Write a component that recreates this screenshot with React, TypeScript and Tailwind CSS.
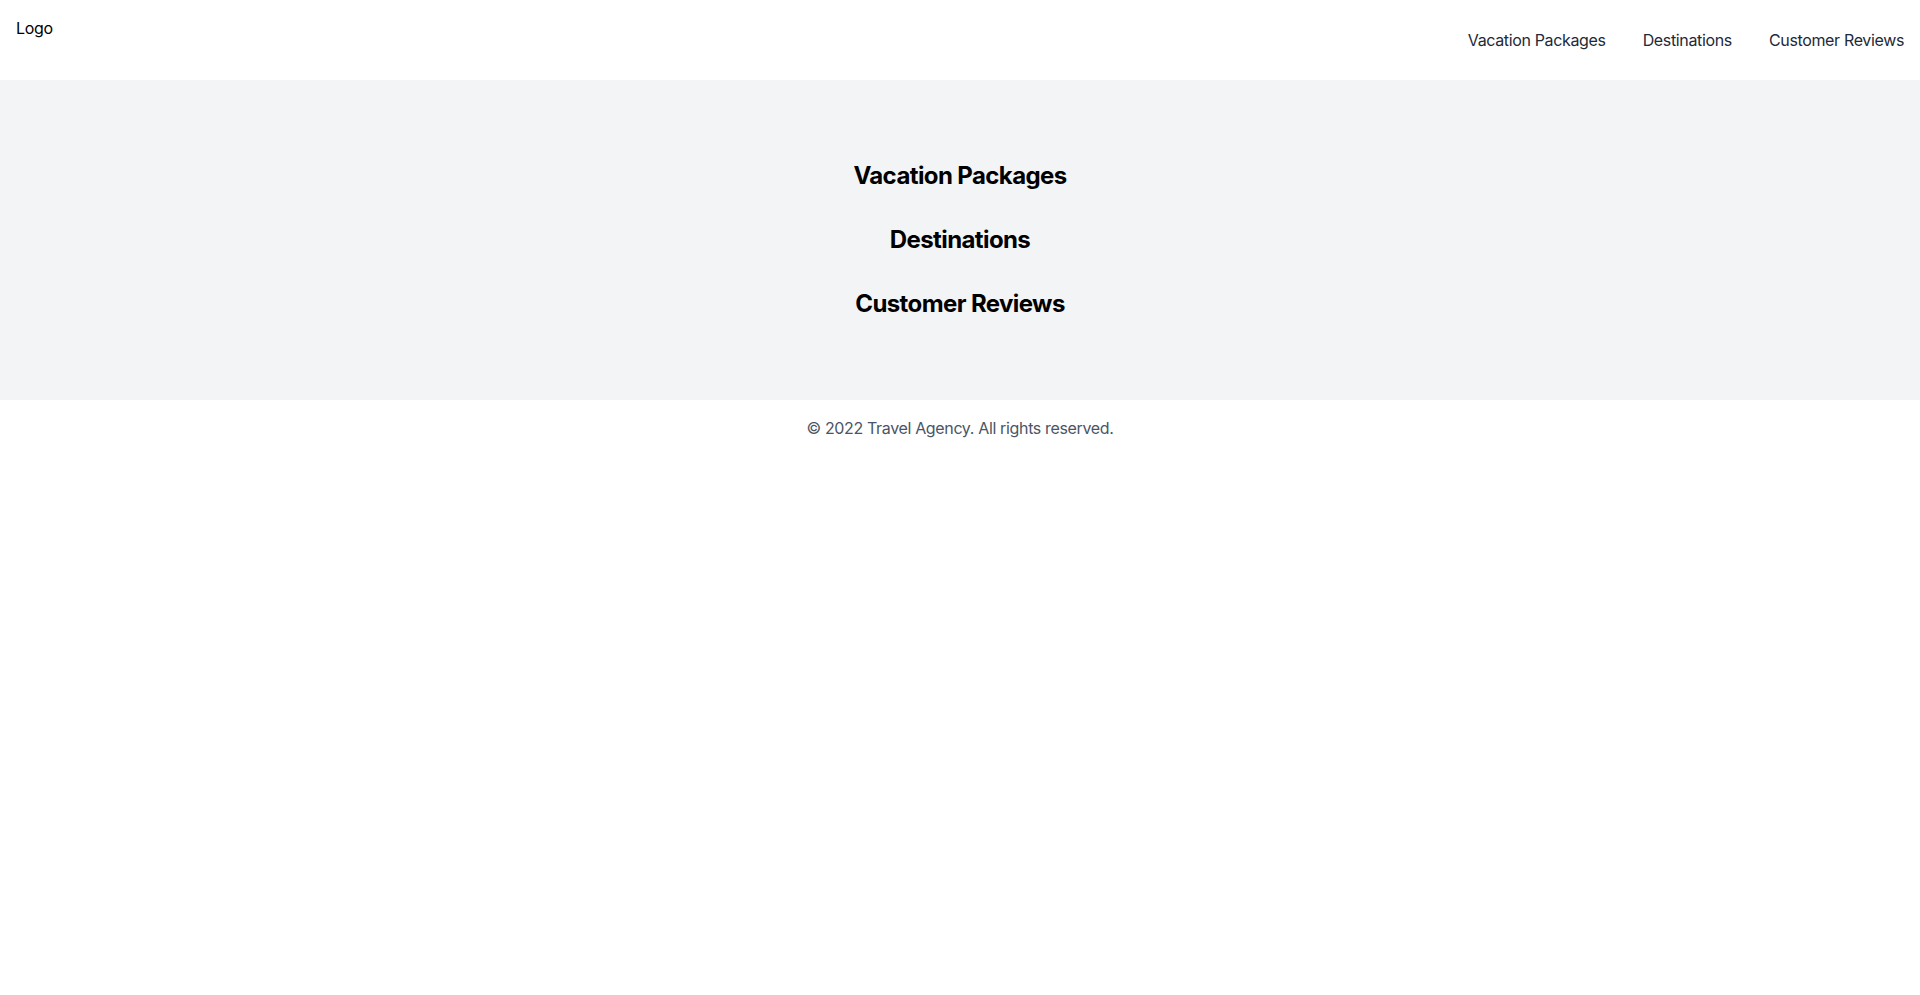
import React from "react";

const sections = ["Vacation Packages", "Destinations", "Customer Reviews"];

export default function App() {
  return (
    <div className="min-h-screen bg-white font-['Inter',sans-serif] text-black">
      <header className="flex h-20 justify-between">
        <div className="p-4 text-base tracking-[-0.3px]">Logo</div>
        <nav className="flex items-center gap-[37px] pr-4 text-base tracking-[-0.35px] text-gray-800">
          {sections.map((s) => (
            <a key={s} href="#">
              {s}
            </a>
          ))}
        </nav>
      </header>

      <main className="bg-gray-100 py-20 text-center">
        <div className="space-y-8">
          {sections.map((s) => (
            <h2 key={s} className="text-2xl font-bold tracking-[-0.6px]">
              {s}
            </h2>
          ))}
        </div>
      </main>

      <footer className="py-4 text-center text-base tracking-[-0.35px] text-gray-600">
        © 2022 Travel Agency. All rights reserved.
      </footer>
    </div>
  );
}
